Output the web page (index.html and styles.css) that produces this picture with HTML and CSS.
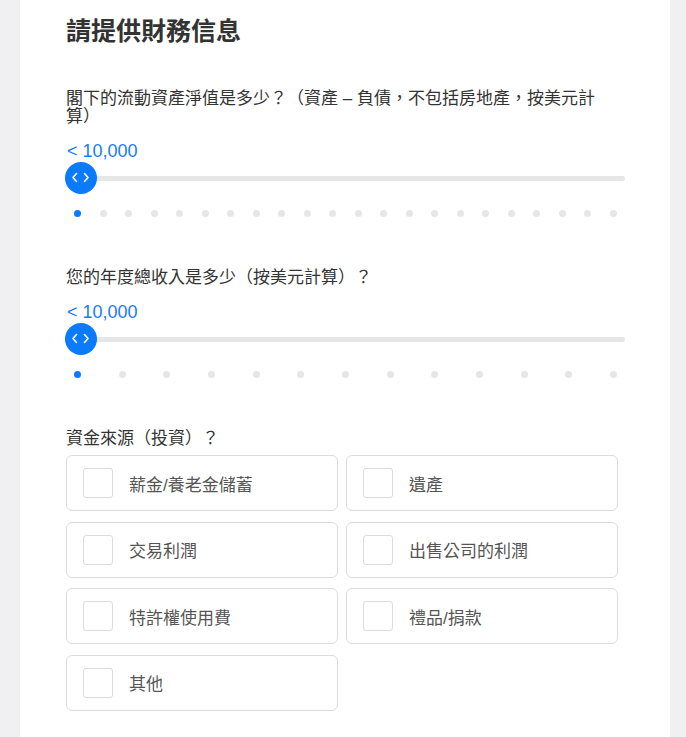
FILE: index.html
```html
<!DOCTYPE html>
<html lang="zh-Hant">
<head>
    <meta charset="UTF-8">
    <meta name="viewport" content="width=device-width, initial-scale=1.0">
    <title>財務信息</title>
    <link rel="stylesheet" href="styles.css">
</head>
<body>
    <main class="card">
        <h1 class="title">請提供財務信息</h1>

        <section class="question">
            <p class="label">閣下的流動資產淨值是多少？（資產 – 負債，不包括房地產，按美元計算）</p>
            <p class="value">&lt; 10,000</p>
            <div class="slider">
                <div class="track"></div>
                <div class="thumb">
                    <svg width="32" height="32" viewBox="0 0 32 32">
                        <path d="M11.5 11.5 L8 15.5 L11.5 19.5 M19.5 11.5 L23 15.5 L19.5 19.5" fill="none" stroke="#fff" stroke-width="1.6" stroke-linecap="round" stroke-linejoin="round"/>
                    </svg>
                </div>
            </div>
            <div class="dots">
                <span class="dot active"></span>
                <span class="dot"></span><span class="dot"></span><span class="dot"></span>
                <span class="dot"></span><span class="dot"></span><span class="dot"></span>
                <span class="dot"></span><span class="dot"></span><span class="dot"></span>
                <span class="dot"></span><span class="dot"></span><span class="dot"></span>
                <span class="dot"></span><span class="dot"></span><span class="dot"></span>
                <span class="dot"></span><span class="dot"></span><span class="dot"></span>
                <span class="dot"></span><span class="dot"></span><span class="dot"></span>
            </div>
        </section>

        <section class="question">
            <p class="label">您的年度總收入是多少（按美元計算）？</p>
            <p class="value">&lt; 10,000</p>
            <div class="slider">
                <div class="track"></div>
                <div class="thumb">
                    <svg width="32" height="32" viewBox="0 0 32 32">
                        <path d="M11.5 11.5 L8 15.5 L11.5 19.5 M19.5 11.5 L23 15.5 L19.5 19.5" fill="none" stroke="#fff" stroke-width="1.6" stroke-linecap="round" stroke-linejoin="round"/>
                    </svg>
                </div>
            </div>
            <div class="dots">
                <span class="dot active"></span>
                <span class="dot"></span><span class="dot"></span><span class="dot"></span>
                <span class="dot"></span><span class="dot"></span><span class="dot"></span>
                <span class="dot"></span><span class="dot"></span><span class="dot"></span>
                <span class="dot"></span><span class="dot"></span><span class="dot"></span>
            </div>
        </section>

        <section class="question">
            <p class="label">資金來源（投資）？</p>
            <div class="options">
                <label class="option"><span class="box"></span>薪金/養老金儲蓄</label>
                <label class="option"><span class="box"></span>遺產</label>
                <label class="option"><span class="box"></span>交易利潤</label>
                <label class="option"><span class="box"></span>出售公司的利潤</label>
                <label class="option"><span class="box"></span>特許權使用費</label>
                <label class="option"><span class="box"></span>禮品/捐款</label>
                <label class="option"><span class="box"></span>其他</label>
            </div>
        </section>
    </main>
</body>
</html>
```

FILE: styles.css
```css
*{
    box-sizing: border-box;
    margin: 0;
    padding: 0;
}
body{
    background-color: #f0f0f2;
    font-family: "Liberation Sans", "Noto Sans CJK TC", sans-serif;
    color: #333;
}
.card{
    margin: 0 16px 0 20px;
    width: 650px;
    min-height: 737px;
    background-color: #fff;
    padding: 16px 45px 40px 46px;
}
.title{
    font-size: 25px;
    line-height: 30px;
    font-weight: bold;
    color: #333;
}
.question{
    margin-top: 52px;
}
.question:first-of-type{
    margin-top: 44px;
}
.label{
    font-size: 17px;
    line-height: 18px;
    color: #333;
    padding-right: 12px;
}
.value{
    margin-top: 14px;
    font-size: 18px;
    line-height: 22px;
    color: #1a7cf7;
    padding-left: 1px;
}
.slider{
    position: relative;
    height: 32px;
    display: flex;
    align-items: center;
}
.track{
    width: 100%;
    height: 5px;
    border-radius: 3px;
    background-color: #e6e6e6;
}
.thumb{
    position: absolute;
    left: -1px;
    top: 0;
    width: 32px;
    height: 32px;
    border-radius: 50%;
    background-color: #0a7aff;
}
.thumb svg{
    display: block;
}
.dots{
    margin-top: 15px;
    height: 8px;
    padding: 0 8px;
    display: flex;
    justify-content: space-between;
    align-items: center;
}
.dot{
    width: 7px;
    height: 7px;
    border-radius: 50%;
    background-color: #e6e6e6;
}
.dot.active{
    background-color: #0a7aff;
}
.options{
    margin-top: 7px;
    width: 552px;
    display: grid;
    grid-template-columns: 1fr 1fr;
    column-gap: 8px;
    row-gap: 10.5px;
}
.option{
    height: 56px;
    border: 1px solid #dcdcdc;
    border-radius: 6px;
    padding-left: 16px;
    display: flex;
    align-items: center;
    gap: 16px;
    font-size: 17px;
    color: #555;
}
.box{
    width: 30px;
    height: 30px;
    border: 1px solid #dcdcdc;
    border-radius: 3px;
}
```
